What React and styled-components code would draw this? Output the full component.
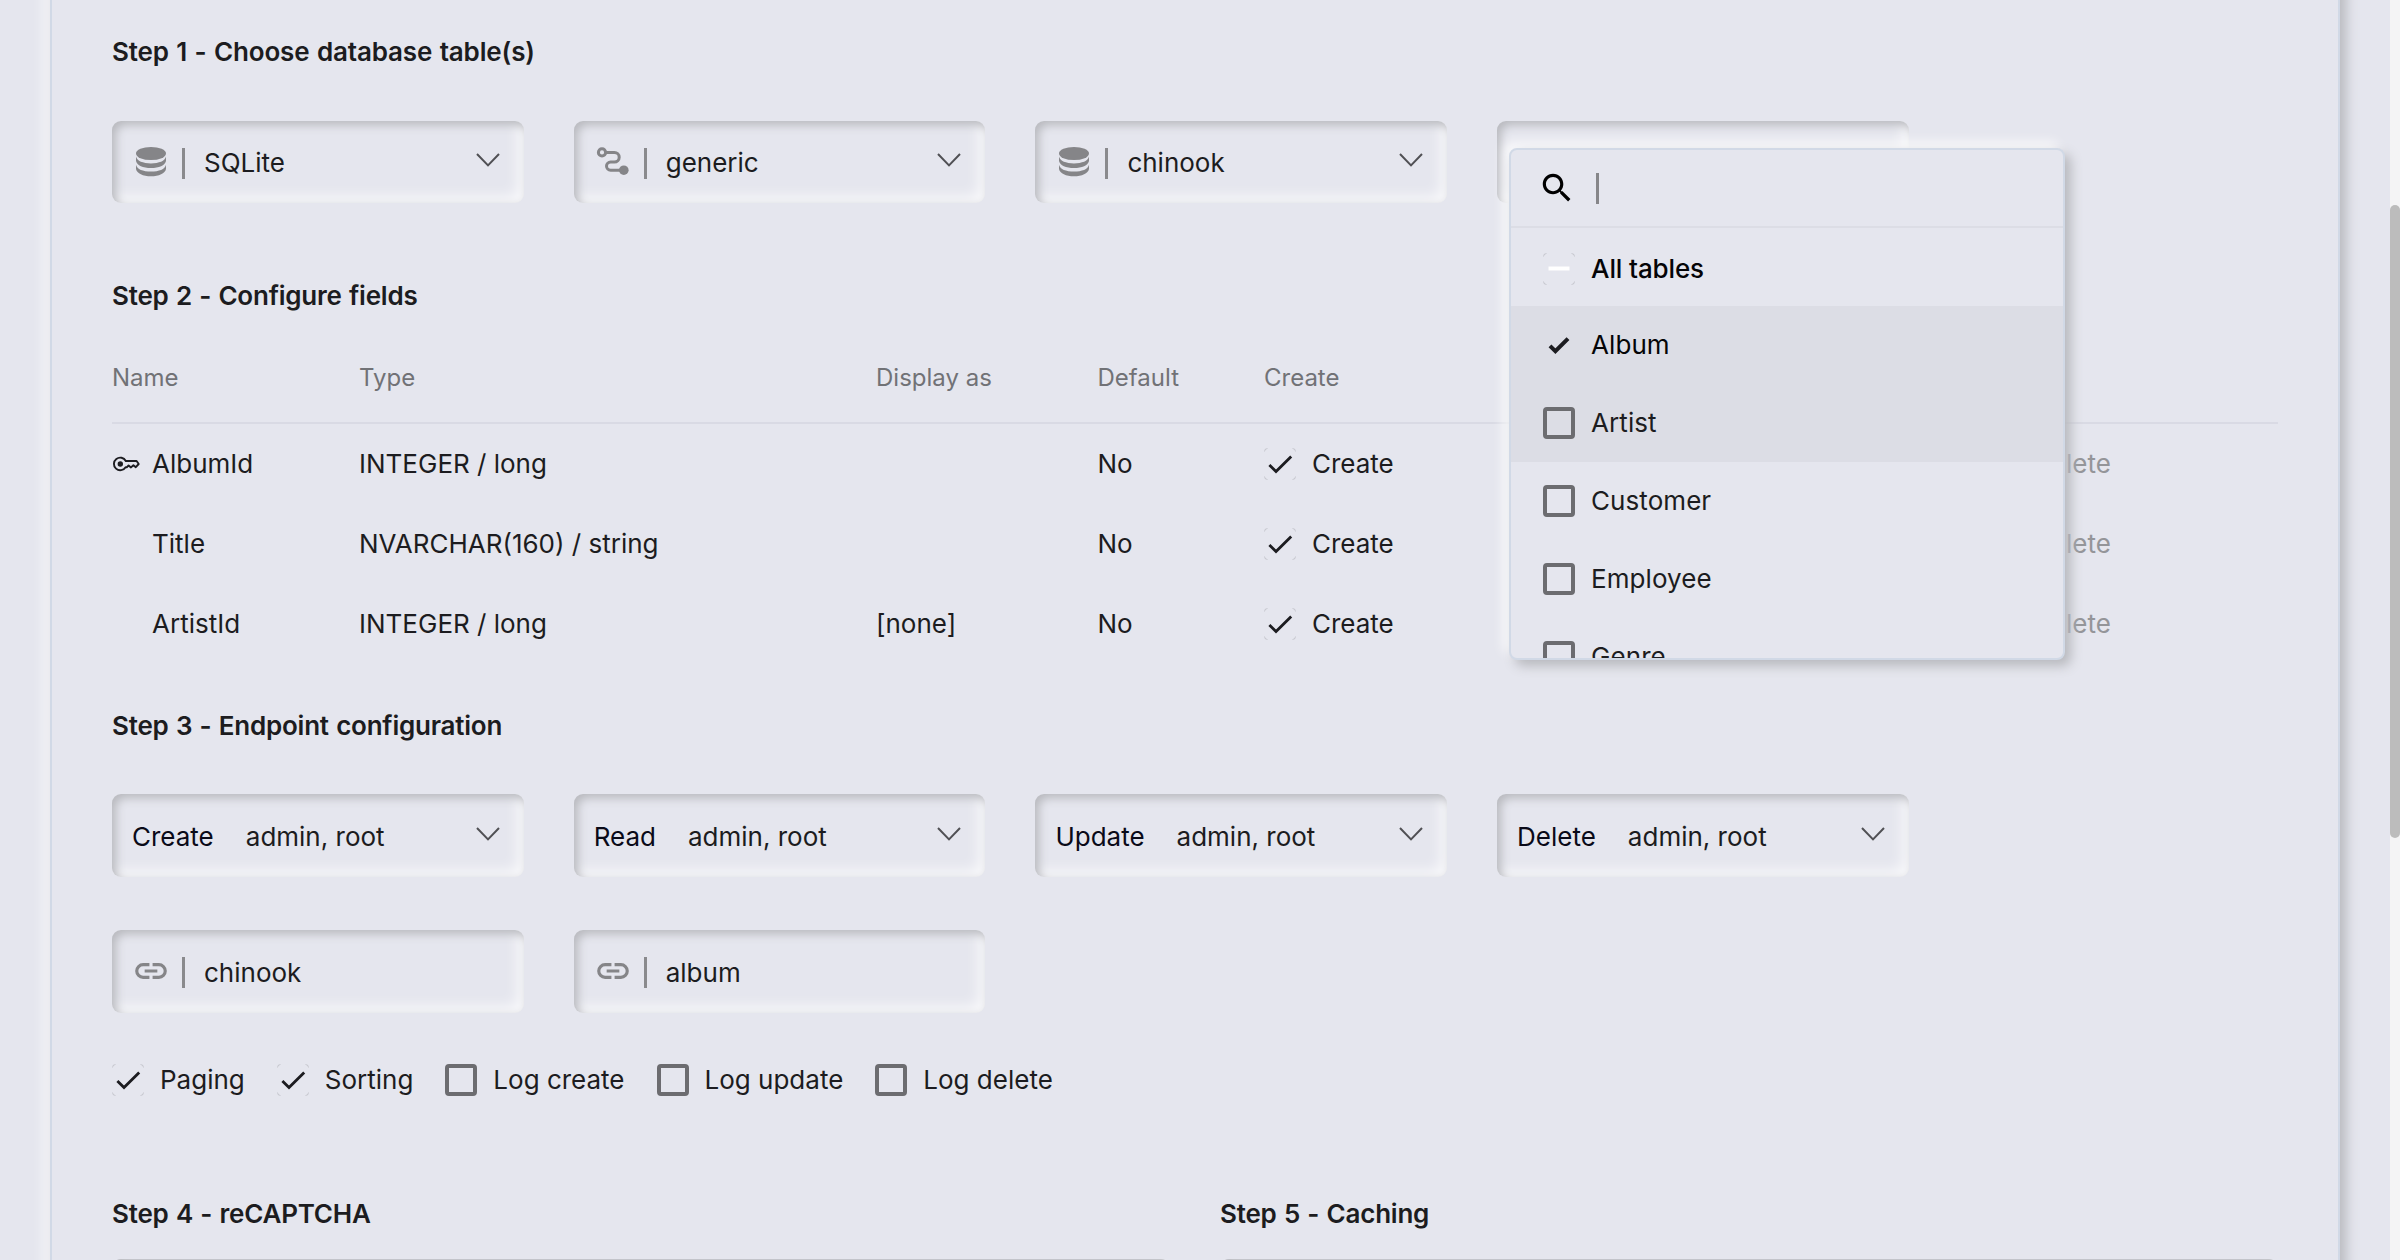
import React from "react";
import styled, { createGlobalStyle } from "styled-components";

const BG = "#e5e6ee";
const INK = "#1c1c20";
const EDGE = "#d1d9e6";

const GlobalStyle = createGlobalStyle`
  html, body {
    margin: 0;
    background: ${BG};
  }
  * {
    box-sizing: border-box;
  }
`;

const Page = styled.div`
  display: flex;
  width: 2400px;
  height: 1260px;
  overflow: hidden;
  background: ${BG};
  color: ${INK};
  font-family: Inter, "Liberation Sans", sans-serif;
  font-size: 26px;
  line-height: 32px;
  white-space: nowrap;
`;

const Main = styled.main`
  flex: 1;
  display: flex;
  padding-left: 50px;
  overflow: hidden;
`;

const Card = styled.section`
  width: 2290px;
  height: 1360px;
  margin-top: -50px;
  padding: 86px 60px 0;
  border: 2px solid ${EDGE};
  border-width: 0 2px;
  box-shadow: 6px 6px 12px #b8b9be, -6px -6px 12px rgba(255, 255, 255, 0.7);
`;

const ScrollTrack = styled.div`
  width: 10px;
  padding-top: 205px;
  background: #f4f4f5;
`;

const ScrollThumb = styled.div`
  height: 633px;
  border-radius: 5px;
  background: #bcbcbc;
`;

const Heading = styled.h2`
  margin: ${(p) => p.$top || 0}px 0 0;
  font-size: 26px;
  line-height: 32px;
  font-weight: 600;
  letter-spacing: ${(p) => p.$spacing || -0.22}px;
  word-spacing: 1px;
`;

const FieldGrid = styled.div`
  display: grid;
  grid-template-columns: repeat(4, 411.7px);
  gap: 53px 50px;
  margin-top: ${(p) => p.$top}px;
`;

const insetLook = `
  border-radius: 9px;
  box-shadow: inset 4px 4px 10px #b8b9be, inset -6px -6px 14px rgba(255, 255, 255, 0.75);
`;

const Field = styled.div`
  display: flex;
  align-items: center;
  height: ${(p) => p.$height || 82}px;
  padding: 0 24px 0 20px;
  ${insetLook}
`;

const FieldDivider = styled.span`
  width: 3px;
  height: 31px;
  margin: 2px 19px 0 12px;
  background: #8a8a8d;
`;

const FieldLabel = styled.span`
  margin-right: 32px;
  padding-top: 2px;
  color: #0a0a18;
`;

const FieldValue = styled.span`
  flex: 1;
  padding-top: 2px;
`;

const Chevron = styled.svg`
  width: 24px;
  height: 14px;
  margin-bottom: 4px;
  fill: none;
  stroke: #505054;
  stroke-width: 2;
`;

const Glyph = styled.svg`
  flex: none;
  width: 38px;
  height: 38px;
  margin-bottom: ${(p) => p.$lift || 0}px;
  color: ${(p) => p.$color || "#858588"};
`;

const Table = styled.div`
  margin: 20px 0 46px;
`;

const Columns = styled.div`
  display: grid;
  grid-template-columns: 247px 517px 221.5px 166.5px 240px 240px 240px 1fr;
  align-items: center;
  height: 80px;
`;

const HeaderRow = styled(Columns)`
  height: 92px;
  padding-top: 2px;
  border-bottom: 2px solid #d9dae4;
  font-size: 24px;
  line-height: 30px;
  color: #717276;
`;

const NameCell = styled.div`
  display: flex;
  align-items: center;
  padding-left: ${(p) => (p.$key ? 0 : 40)}px;
`;

const KeySlot = styled.svg`
  width: 40px;
  height: 32px;
`;

const CheckLabel = styled.label`
  display: flex;
  align-items: center;
  gap: 16px;
  color: ${(p) => (p.$disabled ? "#949599" : "inherit")};
`;

const Empty = styled.span`
  width: 32px;
  height: 32px;
  border: 4px solid #6c6c70;
  border-radius: 4px;
`;

const Mark = styled.svg`
  width: 32px;
  height: 32px;
  fill: none;
`;

const Options = styled.div`
  display: flex;
  gap: 32px;
  margin-top: 51px;
`;

const Split = styled.div`
  display: grid;
  grid-template-columns: 1fr 1fr;
  gap: 50px;
  margin-top: 102px;
`;

const Panel = styled.div`
  height: 82px;
  margin-top: 29px;
  ${insetLook}
`;

const Anchor = styled.div`
  position: relative;
`;

const Menu = styled.div`
  position: absolute;
  z-index: 2;
  left: 12px;
  top: 27px;
  width: 556px;
  height: 512px;
  overflow: hidden;
  border: 2px solid ${EDGE};
  border-radius: 8px;
  background: ${BG};
  box-shadow: 6px 6px 12px #b8b9be, -6px -6px 12px rgba(255, 255, 255, 0.8);
`;

const SearchRow = styled.div`
  display: flex;
  align-items: center;
  height: 78px;
  padding-left: 27px;
  border-bottom: 2px solid #dcdde5;
`;

const Caret = styled.span`
  width: 3px;
  height: 31px;
  margin-left: 20px;
  background: #868689;
`;

const MenuItem = styled.div`
  display: flex;
  align-items: center;
  gap: 16px;
  height: 78px;
  padding-left: 32px;
  letter-spacing: 0.06px;
  background: ${(p) => (p.$active ? "#dcdde5" : "transparent")};
  color: ${(p) => (p.$strong ? "#050507" : INK)};
`;

const AllItem = styled(MenuItem)`
  padding-top: 3px;
  font-weight: 500;
  letter-spacing: -0.12px;
`;

function DatabaseIcon() {
  return (
    <Glyph viewBox="0 0 38 38" fill="currentColor">
      <ellipse cx="19" cy="10.5" rx="15" ry="6.6" />
      <path d="M4 13.6C5 18.2 11 20.4 19 20.4S33 18.2 34 13.6V18C33 22.4 27 25 19 25S5 22.4 4 18Z" />
      <path d="M4 21.8C5 26.4 11 28.6 19 28.6S33 26.4 34 21.8V26C33 30.6 27 33.3 19 33.3S5 30.6 4 26Z" />
    </Glyph>
  );
}

function RouteIcon() {
  return (
    <Glyph viewBox="0 0 38 38" fill="none" stroke="currentColor" strokeWidth="3">
      <circle cx="8" cy="9.4" r="3.6" />
      <path d="M11.5 9.4H20.4A4.8 4.8 0 0 1 20.4 19H16.6A4.1 4.1 0 0 0 16.6 27.2H28" />
      <circle cx="29.8" cy="27.2" r="4.8" fill="currentColor" stroke="none" />
    </Glyph>
  );
}

function LinkIcon() {
  return (
    <Glyph viewBox="0 -960 960 960" fill="currentColor" $lift={2}>
      <path d="M440-280H280q-83 0-141.5-58.5T80-480q0-83 58.5-141.5T280-680h160v80H280q-50 0-85 35t-35 85q0 50 35 85t85 35h160v80ZM320-440v-80h320v80H320Zm200 160v-80h160q50 0 85-35t35-85q0-50-35-85t-85-35H520v-80h160q83 0 141.5 58.5T880-480q0 83-58.5 141.5T680-280H520Z" />
    </Glyph>
  );
}

function SearchIcon() {
  return (
    <Glyph viewBox="0 0 24 24" fill="currentColor" $color="#000">
      <path d="M15.5 14h-.79l-.28-.27C15.41 12.59 16 11.11 16 9.5 16 5.91 13.09 3 9.5 3S3 5.91 3 9.5 5.91 16 9.5 16c1.61 0 3.09-.59 4.23-1.57l.27.28v.79l5 4.99L20.49 19l-4.99-5zm-6 0C7.01 14 5 11.99 5 9.5S7.01 5 9.5 5 14 7.01 14 9.5 11.99 14 9.5 14z" />
    </Glyph>
  );
}

function KeyIcon() {
  return (
    <KeySlot viewBox="0 0 40 32" fill="none" stroke={INK} strokeWidth="1.9" strokeLinejoin="round">
      <path d="M13.8 13H24.6L26.7 16L23.8 19.2L21.4 17.2L19 19.4L16.6 17.4L15 19.2H13.6A6.3 6.3 0 1 1 13.8 13Z" />
      <circle cx="8.3" cy="16" r="2.7" fill={INK} stroke="none" />
    </KeySlot>
  );
}

function Corners() {
  return (
    <path
      d="M.5 3.5A3 3 0 0 1 3.5 .5M28.5 .5A3 3 0 0 1 31.5 3.5M31.5 28.5A3 3 0 0 1 28.5 31.5M3.5 31.5A3 3 0 0 1 .5 28.5"
      stroke="#000"
      strokeOpacity="0.13"
    />
  );
}

function Check({ label, on, disabled }) {
  return (
    <CheckLabel $disabled={disabled}>
      {on ? (
        <Mark viewBox="0 0 32 32">
          <Corners />
          <path d="M5.4 17L12 23.6L27.2 8.4" stroke={disabled ? "#949599" : INK} strokeWidth="2.8" />
        </Mark>
      ) : (
        <Empty />
      )}
      {label}
    </CheckLabel>
  );
}

function SelectField({ icon, label, value, height, chevron = true }) {
  return (
    <Field $height={height}>
      {icon}
      {icon && <FieldDivider />}
      {label && <FieldLabel>{label}</FieldLabel>}
      <FieldValue>{value}</FieldValue>
      {chevron && (
        <Chevron viewBox="0 0 24 14">
          <path d="M1 1L12 12.4L23 1" />
        </Chevron>
      )}
    </Field>
  );
}

const tables = ["Artist", "Customer", "Employee", "Genre"];

function TableMenu() {
  return (
    <Menu>
      <SearchRow>
        <SearchIcon />
        <Caret />
      </SearchRow>
      <AllItem $strong>
        <Mark viewBox="0 0 32 32">
          <Corners />
          <path d="M5.5 15.5H26.5" stroke="#fff" strokeWidth="4" />
        </Mark>
        All tables
      </AllItem>
      <MenuItem $active $strong>
        <Mark viewBox="0 0 32 32">
          <path d="M7 16.8L12.4 22.2L25 9.6" stroke={INK} strokeWidth="4" />
        </Mark>
        Album
      </MenuItem>
      {tables.map((name, i) => (
        <MenuItem key={name} $active={i === 0}>
          <Empty />
          {name}
        </MenuItem>
      ))}
    </Menu>
  );
}

const rows = [
  { name: "AlbumId", type: "INTEGER / long", display: "", primary: true },
  { name: "Title", type: "NVARCHAR(160) / string", display: "" },
  { name: "ArtistId", type: "INTEGER / long", display: "[none]" },
];

export default function App() {
  return (
    <Page>
      <GlobalStyle />
      <Main>
        <Card>
          <Heading $spacing={-0.14}>Step 1 - Choose database table(s)</Heading>
          <FieldGrid $top={53}>
            <SelectField icon={<DatabaseIcon />} value="SQLite" />
            <SelectField icon={<RouteIcon />} value="generic" />
            <SelectField icon={<DatabaseIcon />} value="chinook" />
            <Anchor>
              <Field />
              <TableMenu />
            </Anchor>
          </FieldGrid>

          <Heading $top={77}>Step 2 - Configure fields</Heading>
          <Table>
            <HeaderRow>
              <span>Name</span>
              <span>Type</span>
              <span>Display as</span>
              <span>Default</span>
              <span>Create</span>
            </HeaderRow>
            {rows.map((row) => (
              <Columns key={row.name}>
                <NameCell $key={row.primary}>
                  {row.primary && <KeyIcon />}
                  {row.name}
                </NameCell>
                <span>{row.type}</span>
                <span>{row.display}</span>
                <span>No</span>
                <Check on label="Create" />
                <span />
                <span />
                <Check on disabled label="Delete" />
              </Columns>
            ))}
          </Table>

          <Heading>Step 3 - Endpoint configuration</Heading>
          <FieldGrid $top={52}>
            {["Create", "Read", "Update", "Delete"].map((verb) => (
              <SelectField key={verb} label={verb} value="admin, root" height={83} />
            ))}
            <SelectField icon={<LinkIcon />} value="chinook" chevron={false} height={83} />
            <SelectField icon={<LinkIcon />} value="album" chevron={false} height={83} />
          </FieldGrid>
          <Options>
            <Check on label="Paging" />
            <Check on label="Sorting" />
            <Check label="Log create" />
            <Check label="Log update" />
            <Check label="Log delete" />
          </Options>

          <Split>
            <div>
              <Heading>Step 4 - reCAPTCHA</Heading>
              <Panel />
            </div>
            <div>
              <Heading>Step 5 - Caching</Heading>
              <Panel />
            </div>
          </Split>
        </Card>
      </Main>
      <ScrollTrack>
        <ScrollThumb />
      </ScrollTrack>
    </Page>
  );
}
